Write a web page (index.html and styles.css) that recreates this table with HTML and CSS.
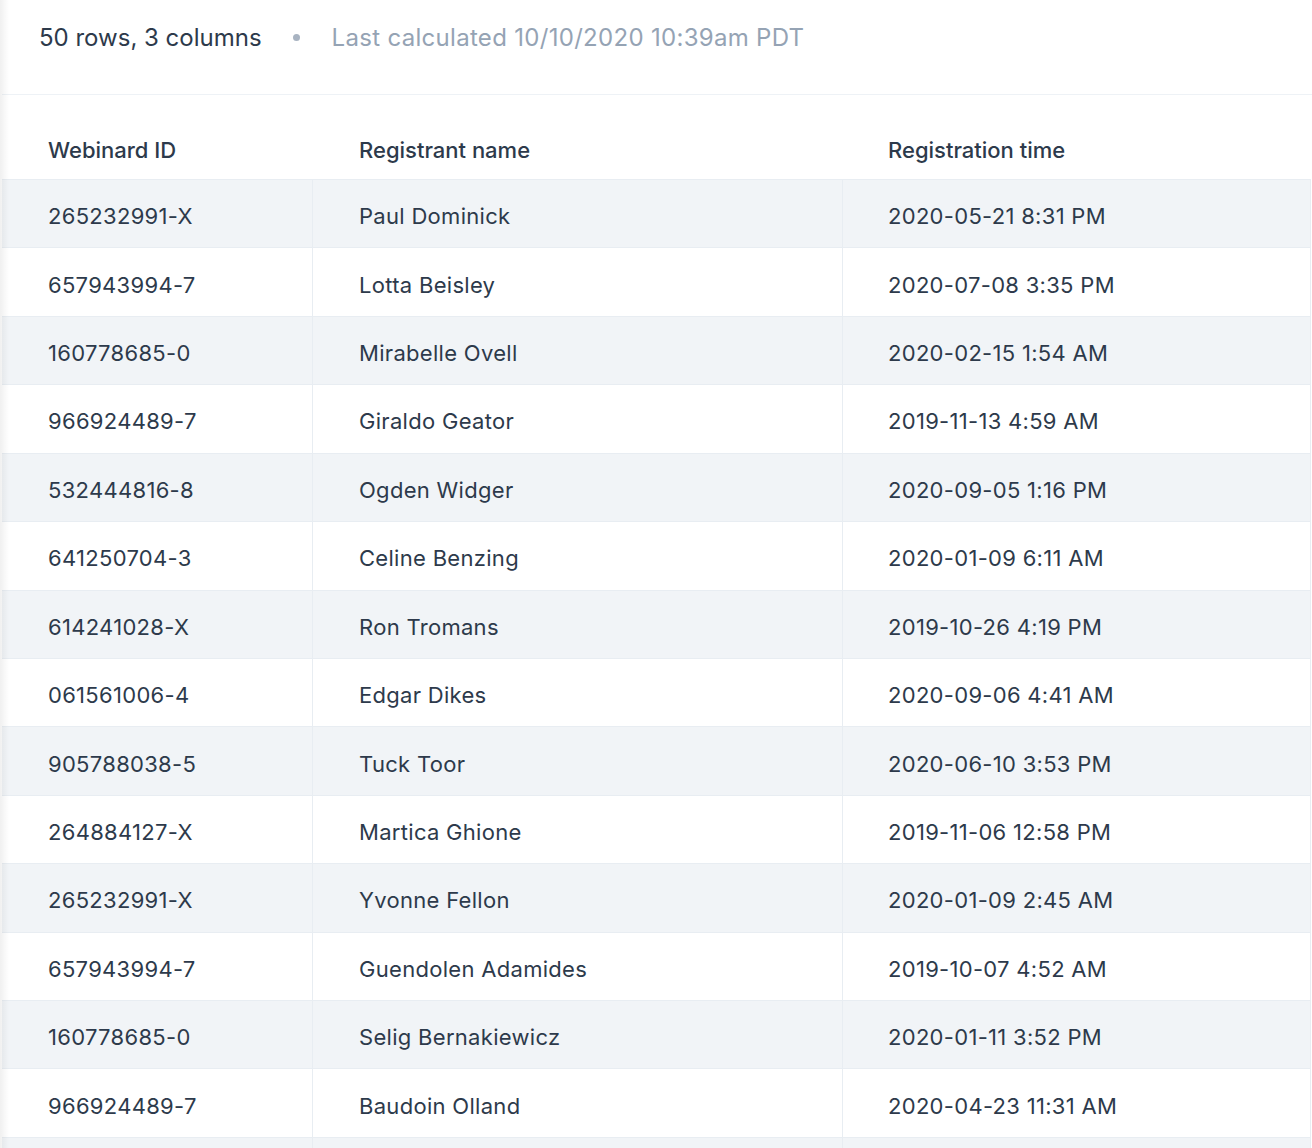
FILE: index.html
```html
<!DOCTYPE html>
<html>
<head>
<meta charset="utf-8">
<link rel="stylesheet" href="styles.css">
</head>
<body>
<div class="page">
  <div class="summary">
    <span class="count">50 rows, 3 columns</span>
    <span class="dot"></span>
    <span class="calc">Last calculated 10/10/2020 10:39am PDT</span>
  </div>
  <div class="table">
    <div class="row head">
      <div class="cell">Webinard ID</div>
      <div class="cell">Registrant name</div>
      <div class="cell">Registration time</div>
    </div>
    <div class="row odd"><div class="cell">265232991-X</div><div class="cell">Paul Dominick</div><div class="cell">2020-05-21 8:31 PM</div></div>
    <div class="row"><div class="cell">657943994-7</div><div class="cell">Lotta Beisley</div><div class="cell">2020-07-08 3:35 PM</div></div>
    <div class="row odd"><div class="cell">160778685-0</div><div class="cell">Mirabelle Ovell</div><div class="cell">2020-02-15 1:54 AM</div></div>
    <div class="row"><div class="cell">966924489-7</div><div class="cell">Giraldo Geator</div><div class="cell">2019-11-13 4:59 AM</div></div>
    <div class="row odd"><div class="cell">532444816-8</div><div class="cell">Ogden Widger</div><div class="cell">2020-09-05 1:16 PM</div></div>
    <div class="row"><div class="cell">641250704-3</div><div class="cell">Celine Benzing</div><div class="cell">2020-01-09 6:11 AM</div></div>
    <div class="row odd"><div class="cell">614241028-X</div><div class="cell">Ron Tromans</div><div class="cell">2019-10-26 4:19 PM</div></div>
    <div class="row"><div class="cell">061561006-4</div><div class="cell">Edgar Dikes</div><div class="cell">2020-09-06 4:41 AM</div></div>
    <div class="row odd"><div class="cell">905788038-5</div><div class="cell">Tuck Toor</div><div class="cell">2020-06-10 3:53 PM</div></div>
    <div class="row"><div class="cell">264884127-X</div><div class="cell">Martica Ghione</div><div class="cell">2019-11-06 12:58 PM</div></div>
    <div class="row odd"><div class="cell">265232991-X</div><div class="cell">Yvonne Fellon</div><div class="cell">2020-01-09 2:45 AM</div></div>
    <div class="row"><div class="cell">657943994-7</div><div class="cell">Guendolen Adamides</div><div class="cell">2019-10-07 4:52 AM</div></div>
    <div class="row odd"><div class="cell">160778685-0</div><div class="cell">Selig Bernakiewicz</div><div class="cell">2020-01-11 3:52 PM</div></div>
    <div class="row"><div class="cell">966924489-7</div><div class="cell">Baudoin Olland</div><div class="cell">2020-04-23 11:31 AM</div></div>
    <div class="row odd"><div class="cell"></div><div class="cell"></div><div class="cell"></div></div>
  </div>
  <div class="edge-shadow"></div>
</div>
</body>
</html>
```

FILE: styles.css
```css
html, body {
  margin: 0;
  padding: 0;
  background: #ffffff;
  overflow: hidden;
}
body {
  font-family: Inter, "Noto Sans", sans-serif;
  color: #2d3a4b;
}
.page {
  position: relative;
  height: 1148px;
  overflow: hidden;
}
.summary {
  height: 95px;
  display: flex;
  align-items: center;
  padding-left: 37px;
  padding-bottom: 20px;
  box-sizing: border-box;
  margin-left: 2px;
  border-bottom: 1px solid #eef2f6;
  font-size: 24px;
}
.summary .count {
  color: #2d3a4b;
  letter-spacing: 0;
}
.summary .dot {
  width: 7px;
  height: 7px;
  border-radius: 50%;
  background: #a8b3c1;
  margin: 0 32px 0 31px;
}
.summary .calc {
  color: #95a3b4;
  letter-spacing: 0.3px;
}
.table {
  margin-left: 2px;
  width: 1309px;
}
.row {
  display: grid;
  grid-template-columns: 311px 530px 468px;
  height: 68.43px;
  box-sizing: border-box;
  border-bottom: 1px solid #e8edf2;
  font-size: 22px;
  letter-spacing: 0.3px;
}
.row.odd {
  background: #f1f4f7;
}
.row .cell {
  display: flex;
  align-items: center;
  padding-left: 46px;
  padding-top: 5px;
  border-right: 1px solid #e8edf2;
  white-space: nowrap;
}
.row .cell:nth-child(3) {
  padding-left: 45px;
}
.row.head {
  height: 85px;
  border-bottom: 1px solid #e8edf2;
  font-weight: 500;
  letter-spacing: 0;
}
.row.head .cell {
  border-right: 1px solid transparent;
  padding-top: 26px;
}
.edge-shadow {
  position: absolute;
  top: 0;
  left: 0;
  width: 9px;
  height: 100%;
  background: linear-gradient(to right, rgba(0,0,0,0.06), rgba(0,0,0,0));
  pointer-events: none;
}
```
